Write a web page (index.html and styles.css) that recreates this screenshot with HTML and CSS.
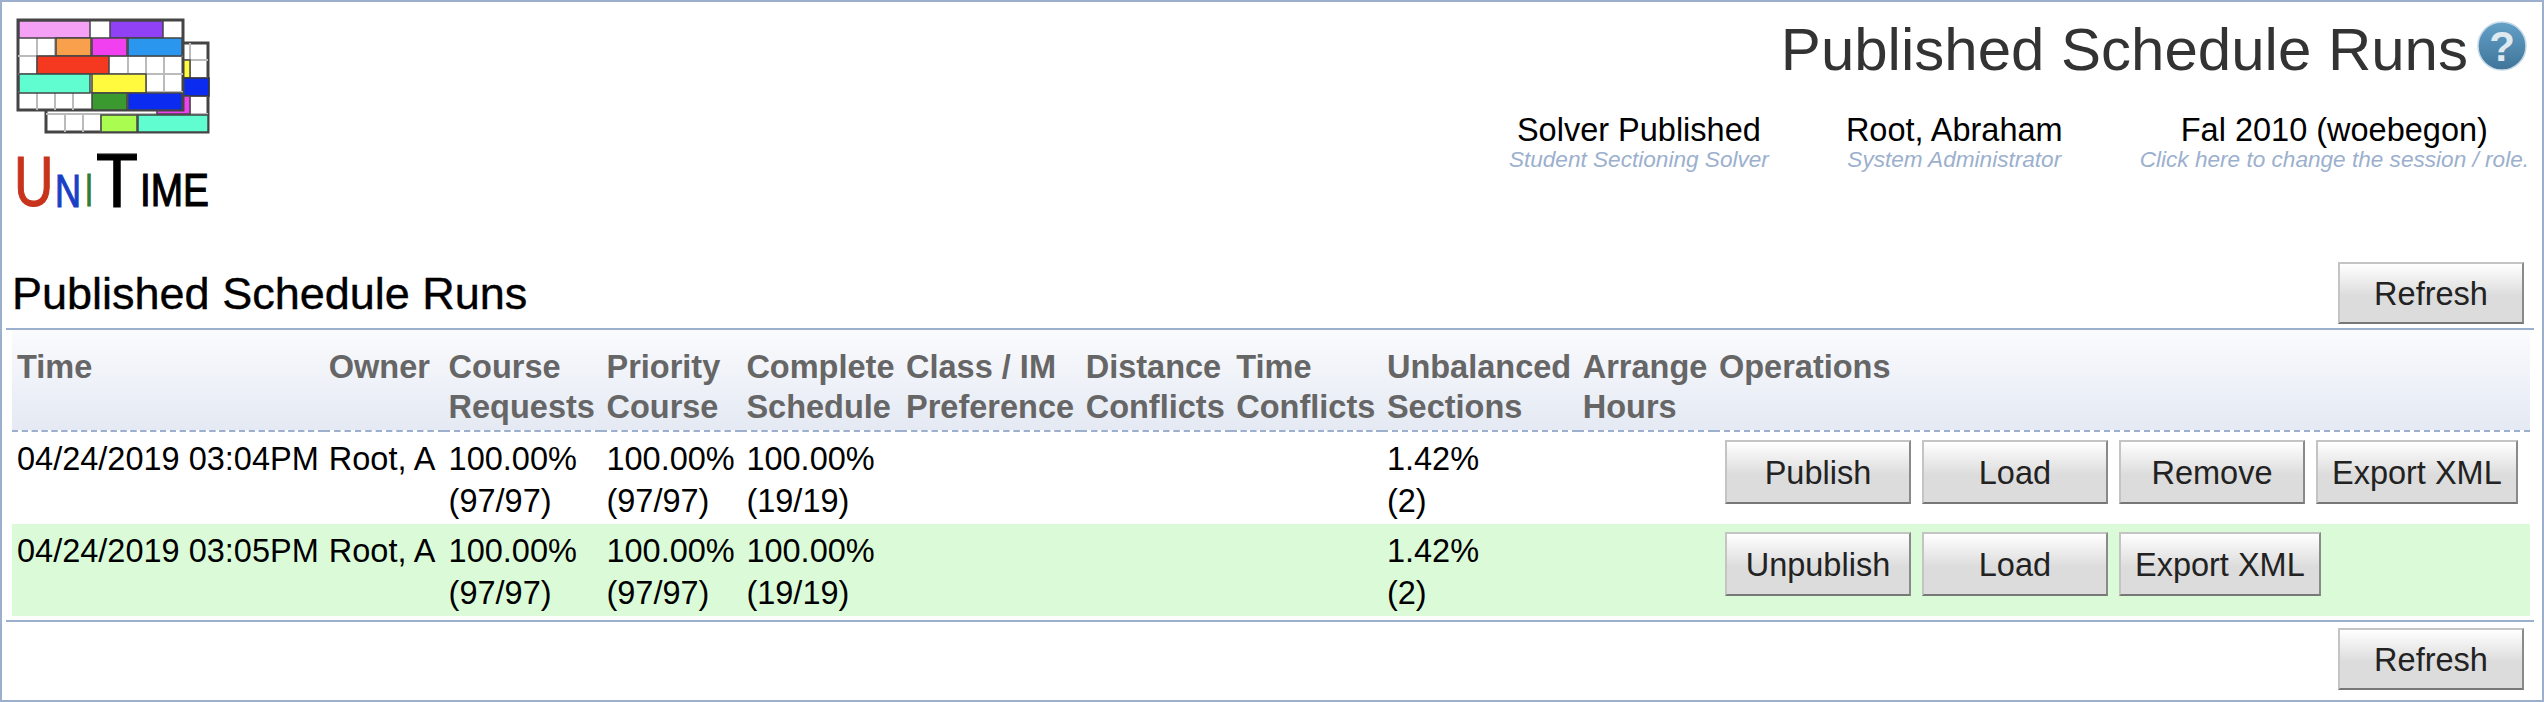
FILE: index.html
```html
<!DOCTYPE html>
<html lang="en">
<head>
    <meta charset="UTF-8">
    <meta name="viewport" content="width=device-width, initial-scale=1.0">
    <title>Published Schedule Runs</title>
    <link rel="stylesheet" href="styles.css">
</head>
<body>
    <div class="page">
        <div class="top">
            <svg class="logo" width="230" height="250" viewBox="0 0 230 250" aria-label="UniTime">
                <g transform="translate(-6,-4)">
                    <g class="logo-grid">
                        <rect x="46" y="45" width="162" height="89" fill="#fff" stroke="#444" stroke-width="3"/>
                        <path d="M46 62H208M46 80H208M46 98H208M46 116H208M65 116V134M83 116V134M101 116V134M190 45V116" stroke="#bbb" stroke-width="2" fill="none"/>
                        <rect x="183" y="62" width="7" height="18" fill="#fffa3d" stroke="#444" stroke-width="1.5"/>
                        <rect x="183" y="80" width="26" height="18" fill="#0b2cf0" stroke="#333" stroke-width="1.5"/>
                        <rect x="157" y="98" width="33" height="18" fill="#f040f0" stroke="#444" stroke-width="1.5"/>
                        <rect x="101" y="117" width="36" height="17" fill="#aafc50" stroke="#444" stroke-width="1.5"/>
                        <rect x="138" y="117" width="70" height="17" fill="#60fdd0" stroke="#444" stroke-width="1.5"/>
                        <rect x="18" y="22" width="165" height="90" fill="#fff" stroke="#444" stroke-width="3"/>
                        <path d="M18 58H183M18 76H183M18 94H183M37 40V112M55 40V112M73 94V112M128 58V94M146 58V94M164 58V94" stroke="#bbb" stroke-width="2" fill="none"/>
                        <g stroke="#444" stroke-width="1.5">
                            <rect x="19" y="23" width="71" height="17" fill="#f4a0f5"/>
                            <rect x="110" y="23" width="53" height="17" fill="#9040f5"/>
                            <rect x="56" y="40" width="35" height="18" fill="#f8a04c"/>
                            <rect x="92" y="40" width="35" height="18" fill="#f040f0"/>
                            <rect x="128" y="40" width="54" height="18" fill="#2b96ee"/>
                            <rect x="37" y="58" width="72" height="18" fill="#f53820"/>
                            <rect x="19" y="76" width="71" height="19" fill="#60fdd0"/>
                            <rect x="92" y="76" width="54" height="19" fill="#fffa3d"/>
                            <rect x="92" y="95" width="35" height="17" fill="#3a9a30"/>
                            <rect x="128" y="95" width="54" height="17" fill="#0b2cf0"/>
                        </g>
                    </g>
                    <text class="logo-text" transform="translate(14,208) scale(0.78,1)" font-size="70" fill="#c8331c" stroke="#c8331c">U</text>
                    <text class="logo-text" x="55" y="209" font-size="46" fill="#1b3fc4" stroke="#1b3fc4" textLength="26" lengthAdjust="spacingAndGlyphs">N</text>
                    <text class="logo-text" x="85" y="208" font-size="46" fill="#2f7d32" stroke="#2f7d32" textLength="8" lengthAdjust="spacingAndGlyphs">I</text>
                    <text class="logo-text" x="96" y="209" font-size="76" fill="#000" stroke="#000" textLength="42" lengthAdjust="spacingAndGlyphs">T</text>
                    <text class="logo-text" x="140" y="208" font-size="46" fill="#000" stroke="#000" textLength="69" lengthAdjust="spacingAndGlyphs">IME</text>
                </g>
            </svg>
            <div class="top-right">
                <div class="title-row">
                    <span class="title">Published Schedule Runs</span>
                    <svg class="help" width="50" height="50" viewBox="0 0 50 50" aria-label="Help">
                        <defs>
                            <linearGradient id="helpFill" x1="0" y1="0" x2="0" y2="1">
                                <stop offset="0" stop-color="#64a0c8"/>
                                <stop offset="1" stop-color="#3f7499"/>
                            </linearGradient>
                        </defs>
                        <circle cx="25" cy="25" r="24" fill="url(#helpFill)" stroke="#c4d8e6" stroke-width="1.5"/>
                        <text class="help-mark" x="25" y="40">?</text>
                    </svg>
                </div>
                <div class="info-row">
                    <div class="info"><div class="info-main">Solver Published</div><div class="info-sub">Student Sectioning Solver</div></div>
                    <div class="info"><div class="info-main">Root, Abraham</div><div class="info-sub">System Administrator</div></div>
                    <div class="info"><div class="info-main">Fal 2010 (woebegon)</div><div class="info-sub">Click here to change the session / role.</div></div>
                </div>
            </div>
        </div>

        <div class="section-head">
            <h2>Published Schedule Runs</h2>
            <button class="btn btn-refresh">Refresh</button>
        </div>

        <table class="runs">
            <thead>
                <tr>
                    <th>Time</th>
                    <th>Owner</th>
                    <th>Course<br>Requests</th>
                    <th>Priority<br>Course</th>
                    <th>Complete<br>Schedule</th>
                    <th>Class / IM<br>Preference</th>
                    <th>Distance<br>Conflicts</th>
                    <th>Time<br>Conflicts</th>
                    <th>Unbalanced<br>Sections</th>
                    <th>Arrange<br>Hours</th>
                    <th class="ops-col">Operations</th>
                </tr>
            </thead>
            <tbody>
                <tr>
                    <td>04/24/2019 03:04PM</td>
                    <td>Root, A</td>
                    <td>100.00%<br>(97/97)</td>
                    <td>100.00%<br>(97/97)</td>
                    <td>100.00%<br>(19/19)</td>
                    <td></td>
                    <td></td>
                    <td></td>
                    <td>1.42%<br>(2)</td>
                    <td></td>
                    <td class="ops">
                        <div class="ops-btns">
                            <button class="btn">Publish</button>
                            <button class="btn">Load</button>
                            <button class="btn">Remove</button>
                            <button class="btn">Export XML</button>
                        </div>
                    </td>
                </tr>
                <tr class="published">
                    <td>04/24/2019 03:05PM</td>
                    <td>Root, A</td>
                    <td>100.00%<br>(97/97)</td>
                    <td>100.00%<br>(97/97)</td>
                    <td>100.00%<br>(19/19)</td>
                    <td></td>
                    <td></td>
                    <td></td>
                    <td>1.42%<br>(2)</td>
                    <td></td>
                    <td class="ops">
                        <div class="ops-btns">
                            <button class="btn">Unpublish</button>
                            <button class="btn">Load</button>
                            <button class="btn">Export XML</button>
                        </div>
                    </td>
                </tr>
            </tbody>
        </table>

        <div class="section-foot">
            <button class="btn btn-refresh">Refresh</button>
        </div>
    </div>
</body>
</html>
```

FILE: styles.css
```css
html, body { margin: 0; padding: 0; background-color: white; }
body { font-family: "Liberation Sans", Arial, sans-serif; font-size: 32.5px; color: black; }
.page { box-sizing: border-box; height: 702px; border: 2px solid #9cb0ce; padding: 0 8px 0 4px; overflow: hidden; }

.top { display: flex; justify-content: space-between; height: 258px; }
.logo { display: block; flex: none; }
.logo-grid { filter: blur(0.5px); }
.logo-text { font-family: "Liberation Sans", Arial, sans-serif; stroke-width: 1.2px; }
.top-right { display: flex; flex-direction: column; align-items: flex-end; }
.title-row { display: flex; align-items: center; margin: 19px 7px 0 0; height: 50px; }
.title { font-size: 60px; color: #333; margin-right: 9px; position: relative; top: 3px; }
.help { display: block; }
.help-mark { font-family: "Liberation Sans", Arial, sans-serif; font-size: 42px; font-weight: bold; fill: #dfe9f0; text-anchor: middle; }
.info-row { display: flex; gap: 77px; margin: 42px 5px 0 0; }
.info { text-align: center; white-space: nowrap; }
.info-main { line-height: 35px; }
.info-sub { font-size: 22.6px; font-style: italic; color: #9cb0ce; line-height: 24px; }

.section-head { display: flex; justify-content: space-between; align-items: center; box-sizing: border-box; height: 70px; border-bottom: 2px solid #9cb0ce; padding: 2px 10px 4px 6px; }
.section-head h2 { margin: 0; padding-top: 2px; font-size: 45px; font-weight: normal; -webkit-text-stroke: 0.4px black; }

.btn { font-family: "Liberation Sans", Arial, sans-serif; font-size: 32.5px; color: #222; height: 64px; min-width: 186px; padding: 2px 14px 0; box-sizing: border-box; background: linear-gradient(#ffffff, #dcdcdc 55%, #dcdcdc); border: 2px solid; border-color: #c4c4c4 #8a8a8a #777 #c4c4c4; border-radius: 0; white-space: nowrap; }
.btn-refresh { height: 62px; }

.runs { border-collapse: collapse; margin: 0 4px 0 6px; width: calc(100% - 10px); }
.runs th { text-align: left; vertical-align: top; font-weight: bold; color: #666; line-height: 40px; padding: 17px 6.6px 3px 5px; white-space: nowrap; background: linear-gradient(#fafbfd, #e4e9f3); border-bottom: 2px dashed #9cb0ce; }
.runs td { vertical-align: top; line-height: 42px; padding: 6px 6.6px 1px 5px; white-space: nowrap; }
.runs th:first-child, .runs td:first-child { padding-right: 5px; }
.runs th:nth-child(2), .runs td:nth-child(2) { padding-right: 8.2px; }
.runs .ops-col { width: 100%; }
.runs .ops { padding: 8px 5px 20px 11px; }
.ops-btns { display: flex; gap: 11px; }
.published td { background-color: #dbfbd8; }

.section-foot { display: flex; justify-content: flex-end; margin-top: 4px; border-top: 2px solid #9cb0ce; padding: 6px 10px 0 0; }
```
